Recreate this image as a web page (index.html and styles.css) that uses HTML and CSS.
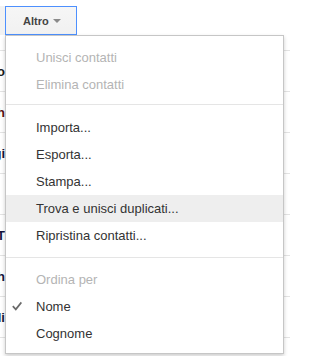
FILE: index.html
```html
<!DOCTYPE html>
<html lang="it">
<head>
<meta charset="utf-8">
<title>Altro</title>
<link rel="stylesheet" href="styles.css">
</head>
<body>
<div class="page">
  <div class="toolbar">
    <div class="prev-btn"></div>
    <div class="more-btn"><span class="more-label">Altro</span><span class="caret"></span></div>
  </div>
  <div class="list">
    <div class="row"><div class="peek c-dark">Paolo</div></div>
    <div class="row"><div class="peek c-red">Beth</div></div>
    <div class="row"><div class="peek c-navy">Luigi</div></div>
    <div class="row"><div class="peek c-navy"></div></div>
    <div class="row"><div class="peek c-navy">T</div></div>
    <div class="row"><div class="peek c-navy">Sarah</div></div>
    <div class="row"><div class="peek c-navy">Nelli</div></div>
    <div class="row"><div class="last-text">l&nbsp;&nbsp;&nbsp;&nbsp;&nbsp;&nbsp;&nbsp;&nbsp;&nbsp;&nbsp;ll k l&nbsp;&nbsp;&nbsp;&nbsp;l</div></div>
  </div>

  <div class="menu">
    <div class="item disabled"><span class="icon"></span>Unisci contatti</div>
    <div class="item disabled"><span class="icon"></span>Elimina contatti</div>
    <div class="sep sep-a"></div>
    <div class="item"><span class="icon"></span>Importa...</div>
    <div class="item"><span class="icon"></span>Esporta...</div>
    <div class="item"><span class="icon"></span>Stampa...</div>
    <div class="item hover"><span class="icon"></span>Trova e unisci duplicati...</div>
    <div class="item"><span class="icon"></span>Ripristina contatti...</div>
    <div class="sep sep-b"></div>
    <div class="item disabled"><span class="icon"></span>Ordina per</div>
    <div class="item"><span class="icon"><svg class="check" width="10" height="10" viewBox="0 0 10 10"><path d="M0.8 5.2 L3.8 8.4 L9.4 1.4" fill="none" stroke="#6a6a6a" stroke-width="1.7"/></svg></span>Nome</div>
    <div class="item"><span class="icon"></span>Cognome</div>
  </div>
</div>
</body>
</html>
```

FILE: styles.css
```css
html, body {
  margin: 0;
  padding: 0;
  background: #ffffff;
}

body {
  font-family: "Liberation Sans", Arial, sans-serif;
  font-size: 13px;
  color: #222;
}

.page {
  position: relative;
  width: 290px;
  height: 356px;
  overflow: hidden;
}

.toolbar {
  display: flex;
  align-items: flex-start;
  height: 35px;
}

.prev-btn {
  width: 5px;
  height: 29px;
  margin-top: 6px;
  background: #f2f2f2;
}

.more-btn {
  box-sizing: border-box;
  width: 72px;
  height: 29px;
  margin-top: 6px;
  padding-left: 17px;
  display: flex;
  align-items: center;
  border: 1px solid #4d90fe;
  background: linear-gradient(#f6f6f6, #f1f1f1);
}

.more-label {
  font-size: 11px;
  font-weight: bold;
  color: #444;
}

.caret {
  width: 0;
  height: 0;
  margin-left: 4px;
  margin-top: 1px;
  border-left: 4px solid transparent;
  border-right: 4px solid transparent;
  border-top: 4px solid #8a8a8a;
}

.list {
  margin-top: 15px;
}

.row {
  box-sizing: border-box;
  height: 41px;
  border-top: 1px solid #e3e3e3;
  display: flex;
  align-items: center;
}

.peek {
  width: 5px;
  display: flex;
  justify-content: flex-end;
  white-space: nowrap;
  font-weight: bold;
  font-size: 13px;
}

.c-dark { color: #1a1a1a; }
.c-red { color: #5a1212; }
.c-navy { color: #14143a; }

.last-text {
  padding-left: 2px;
  margin-top: 20px;
  white-space: pre;
  font-weight: bold;
  color: #1a1a2a;
}

.menu {
  position: absolute;
  left: 5px;
  top: 35px;
  box-sizing: border-box;
  width: 279px;
  padding: 8px 0 6px 0;
  background: #ffffff;
  border: 1px solid #c6c6c6;
  box-shadow: 0 2px 4px rgba(0, 0, 0, 0.2);
}

.item {
  display: flex;
  align-items: center;
  height: 27px;
  line-height: 27px;
  color: #333;
  white-space: nowrap;
}

.item.disabled {
  color: #b4b4b4;
}

.item.hover {
  background: #eeeeee;
}

.icon {
  flex: 0 0 30px;
  display: flex;
  align-items: center;
  padding-left: 6px;
  box-sizing: border-box;
  height: 27px;
}

.check {
  display: block;
  margin-top: -2px;
}

.sep {
  height: 1px;
  background: #e5e5e5;
}

.sep-a {
  margin: 6px 0 9px 0;
}

.sep-b {
  margin: 8px 0 8px 0;
}
```
